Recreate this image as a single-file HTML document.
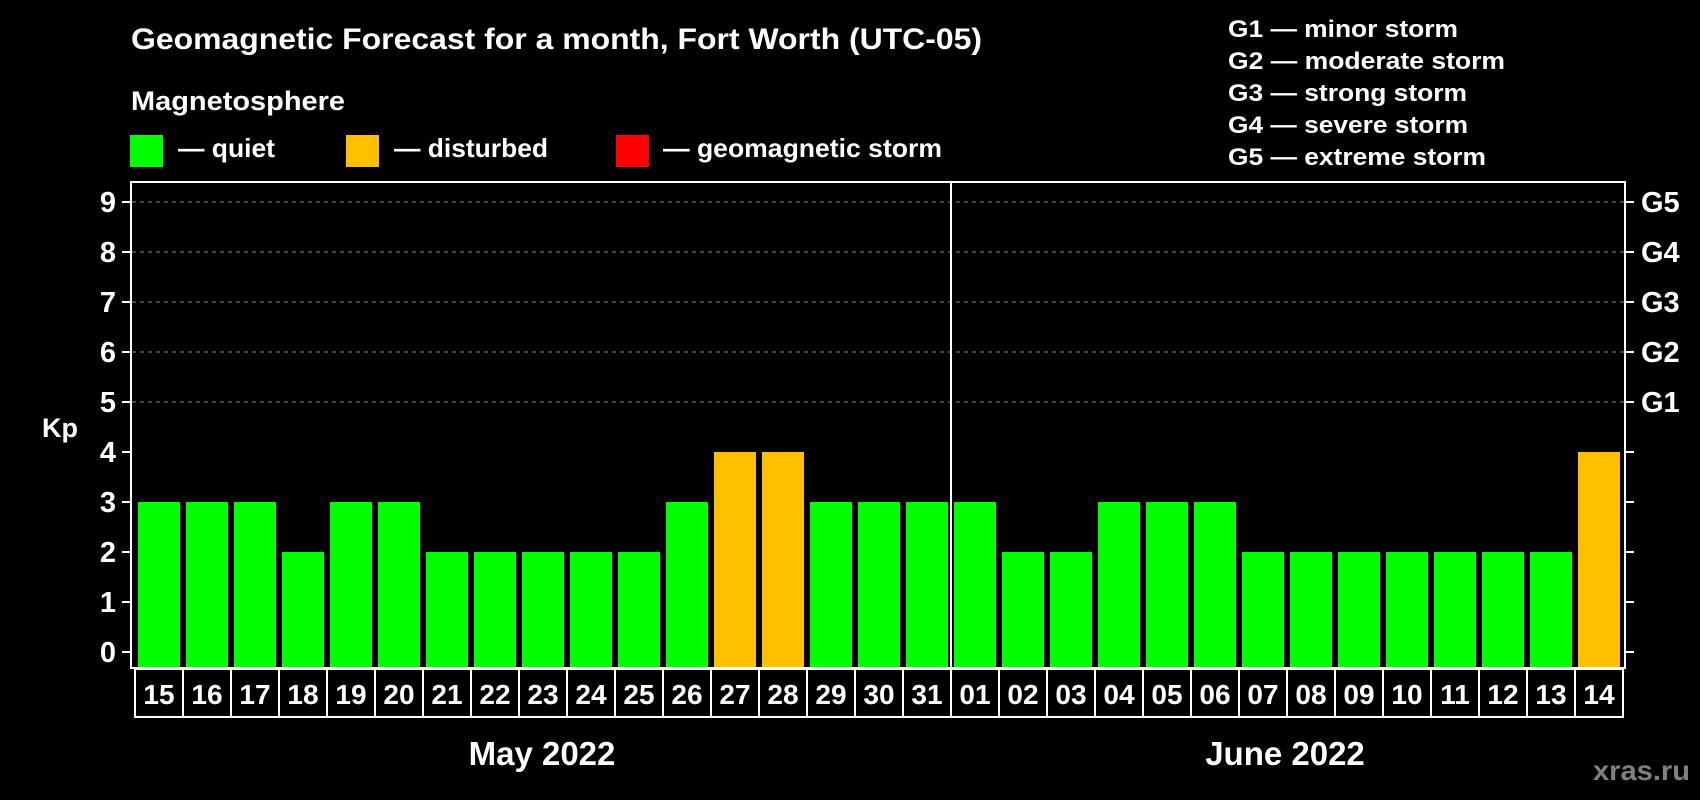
<!DOCTYPE html>
<html><head><meta charset="utf-8"><style>
html,body{margin:0;padding:0;background:#000;}
svg{display:block;}
text{font-family:"Liberation Sans",Arial,sans-serif;font-weight:bold;fill:#fff;}
</style></head><body>
<svg width="1700" height="800" viewBox="0 0 1700 800" xmlns="http://www.w3.org/2000/svg">
<rect width="1700" height="800" fill="#000"/>
<text x="131" y="49" font-size="30" textLength="851" lengthAdjust="spacingAndGlyphs">Geomagnetic Forecast for a month, Fort Worth (UTC-05)</text>
<text x="131" y="110" font-size="27" textLength="214" lengthAdjust="spacingAndGlyphs">Magnetosphere</text>
<rect x="130" y="135" width="33" height="32" fill="#00ff00"/>
<text x="178" y="157" font-size="26" textLength="97" lengthAdjust="spacingAndGlyphs">— quiet</text>
<rect x="346" y="135" width="33" height="32" fill="#ffc000"/>
<text x="394" y="157" font-size="26" textLength="154" lengthAdjust="spacingAndGlyphs">— disturbed</text>
<rect x="616" y="135" width="33" height="32" fill="#ff0000"/>
<text x="663" y="157" font-size="26" textLength="279" lengthAdjust="spacingAndGlyphs">— geomagnetic storm</text>
<g font-size="24">
<text x="1228" y="37" textLength="230" lengthAdjust="spacingAndGlyphs">G1 — minor storm</text>
<text x="1228" y="69" textLength="277" lengthAdjust="spacingAndGlyphs">G2 — moderate storm</text>
<text x="1228" y="101" textLength="239" lengthAdjust="spacingAndGlyphs">G3 — strong storm</text>
<text x="1228" y="133" textLength="240" lengthAdjust="spacingAndGlyphs">G4 — severe storm</text>
<text x="1228" y="165" textLength="258" lengthAdjust="spacingAndGlyphs">G5 — extreme storm</text>
</g>
<g stroke="#888" stroke-width="1" stroke-dasharray="4,4">
<line x1="132" y1="202" x2="1624" y2="202"/>
<line x1="132" y1="252" x2="1624" y2="252"/>
<line x1="132" y1="302" x2="1624" y2="302"/>
<line x1="132" y1="352" x2="1624" y2="352"/>
<line x1="132" y1="402" x2="1624" y2="402"/>
</g>
<g id="bars"></g>
<rect x="131" y="182" width="1494" height="486" fill="none" stroke="#fff" stroke-width="2"/>
<line x1="951" y1="182" x2="951" y2="668" stroke="#fff" stroke-width="2"/>
<g stroke="#fff" stroke-width="2" id="ticks"></g>
<g font-size="29" text-anchor="end" id="ylab"></g>
<g font-size="29" id="glab">
<text x="1641" y="212">G5</text>
<text x="1641" y="262">G4</text>
<text x="1641" y="312">G3</text>
<text x="1641" y="362">G2</text>
<text x="1641" y="412">G1</text>
</g>
<text x="42" y="437" font-size="27">Kp</text>
<g id="dates"></g>
<text x="542" y="765" font-size="33" text-anchor="middle">May 2022</text>
<text x="1285" y="765" font-size="33" text-anchor="middle">June 2022</text>
<text x="1690" y="780" font-size="28" text-anchor="end" style="fill:#808080" textLength="97" lengthAdjust="spacingAndGlyphs">xras.ru</text>
<script>
var ns="http://www.w3.org/2000/svg";
var days=["15","16","17","18","19","20","21","22","23","24","25","26","27","28","29","30","31","01","02","03","04","05","06","07","08","09","10","11","12","13","14"];
var vals=[3,3,3,2,3,3,2,2,2,2,2,3,4,4,3,3,3,3,2,2,3,3,3,2,2,2,2,2,2,2,4];
var b=document.getElementById("bars"),d=document.getElementById("dates");
for(var i=0;i<31;i++){
 var x=138+48*i,v=vals[i];
 var r=document.createElementNS(ns,"rect");
 r.setAttribute("x",x);r.setAttribute("width",42);
 r.setAttribute("y",652-50*v);r.setAttribute("height",16+50*v);
 r.setAttribute("fill",v>=4?"#ffc000":"#00ff00");b.appendChild(r);
 var c=document.createElementNS(ns,"rect");
 c.setAttribute("x",135+48*i);c.setAttribute("y",669);c.setAttribute("width",48);c.setAttribute("height",48);
 c.setAttribute("fill","none");c.setAttribute("stroke","#fff");c.setAttribute("stroke-width","2");d.appendChild(c);
 var t=document.createElementNS(ns,"text");
 t.setAttribute("x",159+48*i);t.setAttribute("y",704);t.setAttribute("font-size","28");t.setAttribute("text-anchor","middle");
 t.textContent=days[i];d.appendChild(t);
}
var tk=document.getElementById("ticks"),yl=document.getElementById("ylab");
for(var k=0;k<=9;k++){
 var y=652-50*k;
 var l=document.createElementNS(ns,"line");l.setAttribute("x1",122);l.setAttribute("x2",131);l.setAttribute("y1",y);l.setAttribute("y2",y);tk.appendChild(l);
 var l2=document.createElementNS(ns,"line");l2.setAttribute("x1",1625);l2.setAttribute("x2",1634);l2.setAttribute("y1",y);l2.setAttribute("y2",y);tk.appendChild(l2);
 var t=document.createElementNS(ns,"text");t.setAttribute("x",116);t.setAttribute("y",y+10);t.textContent=k;yl.appendChild(t);
}
</script>
</svg>
</body></html>
